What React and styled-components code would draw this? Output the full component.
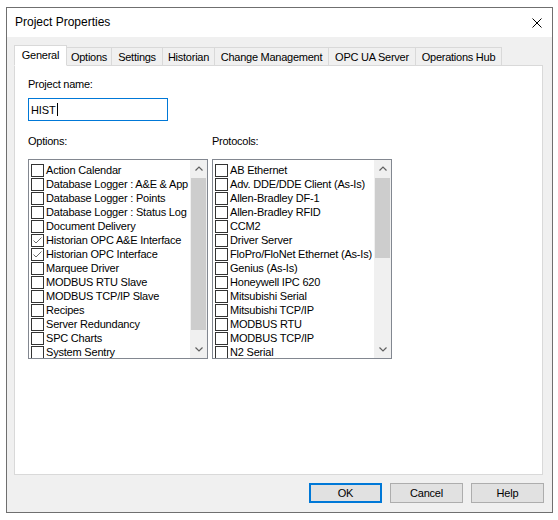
import React from 'react';
import styled, { createGlobalStyle } from 'styled-components';

const GlobalStyle = createGlobalStyle`
  html, body {
    margin: 0;
    padding: 0;
    background: #fff;
  }
  body {
    font-family: "Liberation Sans", Arial, sans-serif;
    font-size: 11px;
    color: #000;
  }
`;

const TABS = [
  { label: 'General', width: 53, active: true },
  { label: 'Options', width: 46 },
  { label: 'Settings', width: 52 },
  { label: 'Historian', width: 53 },
  { label: 'Change Management', width: 115 },
  { label: 'OPC UA Server', width: 88 },
  { label: 'Operations Hub', width: 87 },
];

const OPTIONS = [
  { label: 'Action Calendar' },
  { label: 'Database Logger : A&E & App' },
  { label: 'Database Logger : Points' },
  { label: 'Database Logger : Status Log' },
  { label: 'Document Delivery' },
  { label: 'Historian OPC A&E Interface', checked: true },
  { label: 'Historian OPC Interface', checked: true },
  { label: 'Marquee Driver' },
  { label: 'MODBUS RTU Slave' },
  { label: 'MODBUS TCP/IP Slave' },
  { label: 'Recipes' },
  { label: 'Server Redundancy' },
  { label: 'SPC Charts' },
  { label: 'System Sentry' },
];

const PROTOCOLS = [
  { label: 'AB Ethernet' },
  { label: 'Adv. DDE/DDE Client (As-Is)' },
  { label: 'Allen-Bradley DF-1' },
  { label: 'Allen-Bradley RFID' },
  { label: 'CCM2' },
  { label: 'Driver Server' },
  { label: 'FloPro/FloNet Ethernet (As-Is)' },
  { label: 'Genius (As-Is)' },
  { label: 'Honeywell IPC 620' },
  { label: 'Mitsubishi Serial' },
  { label: 'Mitsubishi TCP/IP' },
  { label: 'MODBUS RTU' },
  { label: 'MODBUS TCP/IP' },
  { label: 'N2 Serial' },
];

const Chevron = ({ down }) => (
  <svg width="8" height="5" viewBox="0 0 8 5">
    <polyline
      points={down ? '0.5,0.5 4,4 7.5,0.5' : '0.5,4.5 4,1 7.5,4.5'}
      fill="none"
      stroke="#606060"
      strokeWidth="1.2"
    />
  </svg>
);

const CheckList = ({ items, thumb }) => (
  <ListBox>
    <Items>
      {items.map(item => (
        <Row key={item.label}>
          <Check>
            {item.checked && (
              <svg width="11" height="11" viewBox="0 0 11 11">
                <polyline points="1.5,5.5 4,8 9.5,2.5" fill="none" stroke="#6a6a6a" strokeWidth="1" />
              </svg>
            )}
          </Check>
          <RowText>{item.label}</RowText>
        </Row>
      ))}
    </Items>
    <ScrollBar>
      <ScrollButton>
        <Chevron />
      </ScrollButton>
      <Track>
        <Thumb $height={thumb} />
      </Track>
      <ScrollButton>
        <Chevron down />
      </ScrollButton>
    </ScrollBar>
  </ListBox>
);

const App = () => {
  return (
    <>
      <GlobalStyle />
      <Window>
        <TitleBar>
          <Title>Project Properties</Title>
          <svg width="10" height="10" viewBox="0 0 10 10">
            <path d="M0.5 0.5 L9.5 9.5 M9.5 0.5 L0.5 9.5" stroke="#000" strokeWidth="1" />
          </svg>
        </TitleBar>

        <Body>
          <TabRow>
            {TABS.map(tab => (
              <Tab key={tab.label} $width={tab.width} $active={tab.active}>
                {tab.label}
              </Tab>
            ))}
          </TabRow>

          <Panel>
            <Label>Project name:</Label>
            <NameInput>
              HIST
              <Caret />
            </NameInput>

            <Columns>
              <Column>
                <Label>Options:</Label>
                <CheckList items={OPTIONS} thumb={152} />
              </Column>
              <Column>
                <Label>Protocols:</Label>
                <CheckList items={PROTOCOLS} thumb={80} />
              </Column>
            </Columns>
          </Panel>

          <Footer>
            <Button $primary>OK</Button>
            <Button>Cancel</Button>
            <Button>Help</Button>
          </Footer>
        </Body>
      </Window>
    </>
  );
};

export default App;

const Window = styled.div`
  box-sizing: border-box;
  width: 547px;
  height: 506px;
  margin: 7px 0 0 6px;
  border: 1px solid #6f6f6f;
  background: #f0f0f0;
  display: flex;
  flex-direction: column;
`;

const TitleBar = styled.div`
  height: 29px;
  flex-shrink: 0;
  background: #fff;
  display: flex;
  align-items: center;
  justify-content: space-between;
  padding: 0 10px 0 8px;
`;

const Title = styled.span`
  font-size: 12px;
  line-height: 29px;
`;

const Body = styled.div`
  flex: 1;
  display: flex;
  flex-direction: column;
  padding: 8px 8px 0 7px;
  min-height: 0;
`;

const TabRow = styled.div`
  display: flex;
  align-items: flex-end;
  height: 21px;
  margin-bottom: -1px;
  position: relative;
  z-index: 1;
`;

const Tab = styled.div`
  box-sizing: border-box;
  width: ${props => props.$width}px;
  height: ${props => (props.$active ? 21 : 19)}px;
  margin-left: -1px;
  padding-top: 3px;
  border: 1px solid #d9d9d9;
  border-bottom-color: ${props => (props.$active ? '#fff' : '#d9d9d9')};
  background: ${props => (props.$active ? '#fff' : '#f0f0f0')};
  text-align: center;
  line-height: 13px;
  letter-spacing: -0.25px;
  white-space: nowrap;
  position: relative;
  z-index: ${props => (props.$active ? 2 : 1)};

  &:first-child {
    margin-left: 0;
  }
`;

const Panel = styled.div`
  box-sizing: border-box;
  flex: 1;
  margin-right: 1px;
  padding: 12px 0 0 13px;
  background: #fff;
  border: 1px solid #d9d9d9;
`;

const Label = styled.div`
  line-height: 13px;
  letter-spacing: -0.25px;
`;

const NameInput = styled.div`
  box-sizing: border-box;
  width: 140px;
  height: 23px;
  margin-top: 7px;
  padding-left: 2px;
  border: 1px solid #0078d7;
  display: flex;
  align-items: center;
  letter-spacing: -0.1px;
`;

const Caret = styled.span`
  width: 1px;
  height: 13px;
  margin-left: 1px;
  background: #000;
`;

const Columns = styled.div`
  display: grid;
  grid-template-columns: 180px 180px;
  column-gap: 4px;
  margin-top: 14px;
`;

const Column = styled.div`
  display: flex;
  flex-direction: column;
  gap: 11px;
`;

const ListBox = styled.div`
  box-sizing: border-box;
  width: 180px;
  height: 200px;
  border: 1px solid #828790;
  background: #fff;
  display: flex;
`;

const Items = styled.div`
  flex: 1;
  min-width: 0;
  overflow: hidden;
  padding-top: 3px;
`;

const Row = styled.div`
  display: flex;
  align-items: center;
  height: 14px;
  padding-left: 2px;
`;

const Check = styled.span`
  box-sizing: border-box;
  flex-shrink: 0;
  width: 13px;
  height: 13px;
  margin-right: 2px;
  border: 1px solid #333;
  background: #fff;
  display: flex;
  align-items: center;
  justify-content: center;
`;

const RowText = styled.span`
  line-height: 14px;
  letter-spacing: -0.2px;
  white-space: nowrap;
`;

const ScrollBar = styled.div`
  width: 17px;
  flex-shrink: 0;
  background: #f0f0f0;
  display: flex;
  flex-direction: column;
`;

const ScrollButton = styled.div`
  height: 17px;
  display: flex;
  align-items: center;
  justify-content: center;
`;

const Track = styled.div`
  flex: 1;
  padding-top: 1px;
`;

const Thumb = styled.div`
  height: ${props => props.$height}px;
  margin: 0 1px;
  background: #cdcdcd;
`;

const Footer = styled.div`
  display: flex;
  justify-content: flex-end;
  gap: 8px;
  padding: 8px 0 9px;
`;

const Button = styled.button`
  box-sizing: border-box;
  width: 73px;
  height: 20px;
  padding: 0;
  font: inherit;
  letter-spacing: -0.2px;
  color: #000;
  background: #e1e1e1;
  border: ${props => (props.$primary ? '2px solid #0078d7' : '1px solid #adadad')};
`;
